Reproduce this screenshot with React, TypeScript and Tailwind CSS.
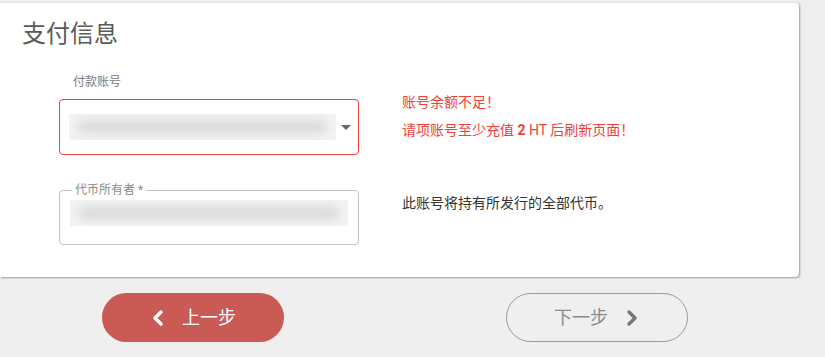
import { ChevronLeft, ChevronRight } from "lucide-react";

const font = { fontFamily: "Roboto, 'Noto Sans CJK SC', sans-serif" };

function Blurred() {
    return (
        <div className="h-[26px] w-full overflow-hidden bg-[#f3f3f3]">
            <div className="mx-[8px] mt-[6px] h-[14px] rounded-full bg-[#dcdcdc] blur-[5px]" />
        </div>
    );
}

export default function App() {
    return (
        <div className="h-[357px] w-[825px] overflow-hidden bg-[#efefef] pt-[2px]" style={font}>
            <div className="h-[275px] w-[799px] rounded-r-[4px] border-t border-[#e6e6e6] bg-white shadow-[1px_1px_2px_rgba(0,0,0,0.35)]">
                <h1 className="pl-[22px] pt-[15px] text-[24px] leading-[32px] text-[#5a5a5a]">支付信息</h1>

                <div className="mt-[25px] flex">
                    <div className="ml-[59px] w-[300px]">
                        <div className="pl-[14px] text-[12px] leading-[14px] text-[#7a7a7a]">付款账号</div>
                        <div className="mt-[10px] flex h-[56px] items-center rounded-[4px] border border-[#f0453a] pl-[9px] pr-[7px]">
                            <div className="w-[268px]"><Blurred /></div>
                            <div className="ml-[5px] h-0 w-0 border-x-[5px] border-t-[5px] border-x-transparent border-t-[#666]" />
                        </div>
                    </div>
                    <div className="ml-[43px] pt-[18px] text-[14px] leading-[18px] text-[#f2403a]">
                        <p>账号余额不足！</p>
                        <p className="mt-[10px]">请项账号至少充值 <b>2</b> HT 后刷新页面！</p>
                    </div>
                </div>

                <div className="mt-[28px] flex">
                    <fieldset className="ml-[59px] h-[62px] w-[300px] rounded-[4px] border border-[#c4c4c4] px-[10px] pt-0">
                        <legend className="ml-[2px] px-[3px] text-[12px] leading-[14px] text-[#8a8a8a]">代币所有者 *</legend>
                        <div className="mt-[3px]"><Blurred /></div>
                    </fieldset>
                    <div className="ml-[43px] pt-[11px] text-[14px] leading-[18px] text-[#333]">此账号将持有所发行的全部代币。</div>
                </div>
            </div>

            <div className="mt-[16px] flex pl-[102px]">
                <button className="flex h-[49px] w-[182px] items-center justify-center gap-[12px] rounded-full bg-[#c95a54] pr-[4px] text-[18px] text-white">
                    <ChevronLeft className="h-[24px] w-[24px]" strokeWidth={3.5} />
                    <span>上一步</span>
                </button>
                <button className="ml-[222px] flex h-[49px] w-[182px] items-center justify-center gap-[12px] rounded-full border border-[#999] pl-[4px] text-[18px] text-[#8a8a8a]">
                    <span>下一步</span>
                    <ChevronRight className="h-[24px] w-[24px] text-[#777]" strokeWidth={3.5} />
                </button>
            </div>
        </div>
    );
}
